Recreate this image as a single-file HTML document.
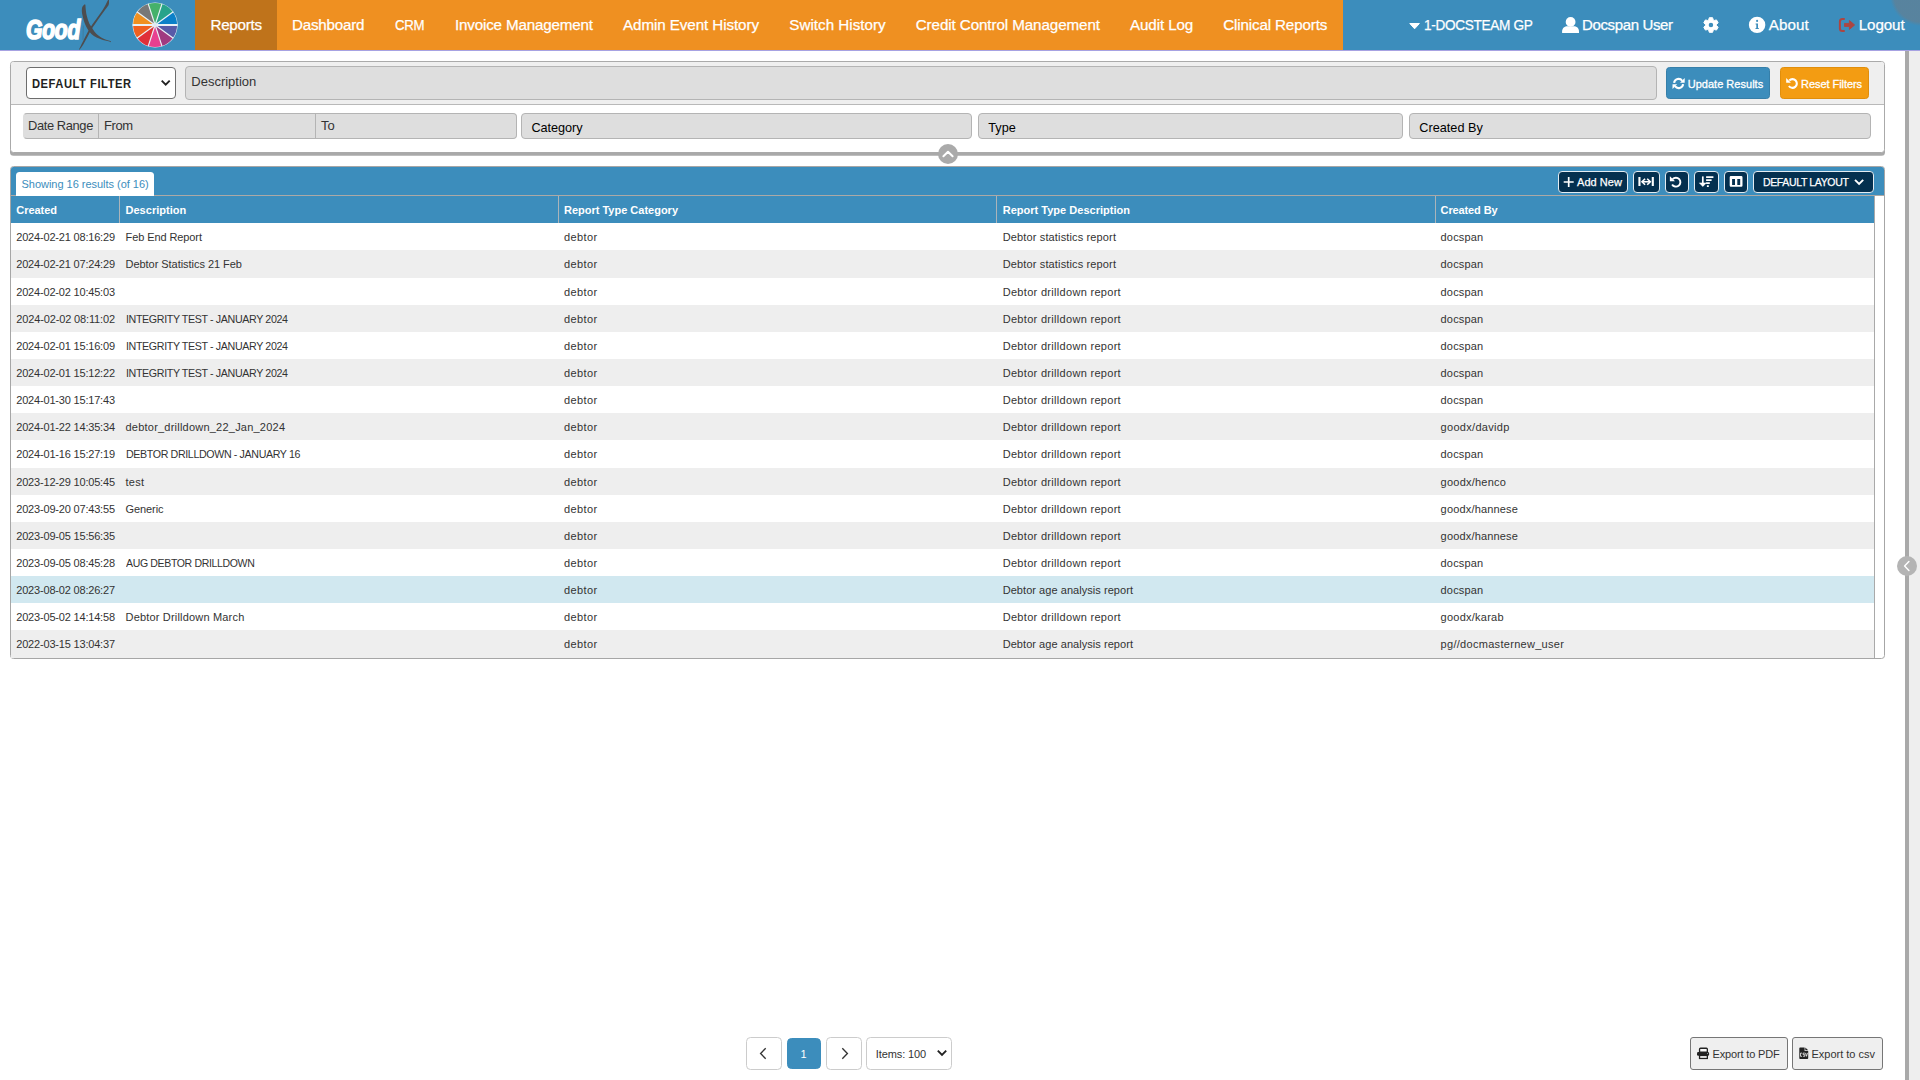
<!DOCTYPE html>
<html lang="en"><head><meta charset="utf-8"><title>Reports</title>
<style>
*{box-sizing:border-box;margin:0;padding:0}
html,body{width:1920px;height:1080px;overflow:hidden;background:#fff}
body{position:relative;font-family:"Liberation Sans",sans-serif;color:#333;font-size:11px}
.a{position:absolute}
.t{position:absolute;white-space:nowrap;display:block}
svg{position:absolute;display:block;overflow:visible}
.nv{font-size:15.2px;color:#fff;-webkit-text-stroke:.25px #fff}
.td{font-size:11px;color:#333}
.th{font-size:11px;color:#fff;font-weight:bold}
.ph{font-size:13px;color:#333}
.phb{font-size:12.7px;color:#000}
.in{position:absolute;background:#dedede;border:1px solid #b4b4b4;border-radius:4px}
.nb{position:absolute;background:#04304f;border:1px solid #e3ecf2;border-radius:4px;top:171px;height:21.5px}
.pg{position:absolute;top:1037px;height:33px;background:#fff;border:1px solid #ccc;border-radius:4.5px}
.ex{position:absolute;top:1037px;height:33px;background:#efefef;border:1px solid #767676;border-radius:3px}
</style></head><body>

<div class="a" style="left:0;top:0;width:1920px;height:50px;background:#3c8dbc"></div>
<div class="a" style="left:195px;top:0;width:1148px;height:50px;background:#ef9021"></div>
<div class="a" style="left:195px;top:0;width:82px;height:50px;background:#bf731b"></div>
<div class="a" style="left:0;top:50px;width:1920px;height:1px;background:#a7a2e2"></div>
<div class="a" style="left:1886px;top:-40px;width:70px;height:70px;border-radius:50%;background:radial-gradient(circle at 50% 50%,rgba(105,125,140,.62) 0,rgba(105,125,140,.62) 27px,rgba(105,125,140,0) 31px)"></div>
<span class="t nv" style="left:210.5px;top:14.3px;line-height:21.2px;letter-spacing:-0.281px;">Reports</span>
<span class="t nv" style="left:292px;top:14.3px;line-height:21.2px;letter-spacing:-0.227px;">Dashboard</span>
<span class="t nv" style="left:395px;top:14.3px;line-height:21.2px;letter-spacing:-0.380px;transform-origin:0 50%;transform:scaleX(0.8719);">CRM</span>
<span class="t nv" style="left:455px;top:14.3px;line-height:21.2px;letter-spacing:-0.176px;">Invoice Management</span>
<span class="t nv" style="left:623px;top:14.3px;line-height:21.2px;letter-spacing:-0.088px;">Admin Event History</span>
<span class="t nv" style="left:789.3px;top:14.3px;line-height:21.2px;letter-spacing:0.014px;">Switch History</span>
<span class="t nv" style="left:915.7px;top:14.3px;line-height:21.2px;letter-spacing:-0.094px;">Credit Control Management</span>
<span class="t nv" style="left:1130px;top:14.3px;line-height:21.2px;letter-spacing:-0.111px;">Audit Log</span>
<span class="t nv" style="left:1223.3px;top:14.3px;line-height:21.2px;letter-spacing:-0.157px;">Clinical Reports</span>
<span class="t nv" style="left:1423.7px;top:14.3px;line-height:21.2px;letter-spacing:-0.380px;transform-origin:0 50%;transform:scaleX(0.8978);">1-DOCSTEAM GP</span>
<span class="t nv" style="left:1582.4px;top:14.3px;line-height:21.2px;letter-spacing:-0.380px;transform-origin:0 50%;transform:scaleX(0.9885);">Docspan User</span>
<span class="t nv" style="left:1768.7px;top:14.3px;line-height:21.2px;letter-spacing:0.074px;">About</span>
<span class="t nv" style="left:1858.7px;top:14.3px;line-height:21.2px;letter-spacing:-0.091px;">Logout</span>
<span class="t" style="left:25.9px;top:12.9px;line-height:34px;font-size:27.5px;font-weight:bold;font-style:italic;color:#fff;transform-origin:0 0;transform:scaleX(.765);letter-spacing:-0.3px;-webkit-text-stroke:1.7px #fff">Good</span>
<svg style="left:70px;top:0" width="50" height="50" viewBox="70 0 50 50"><path fill="#4d4d4f" d="M84.8 4.3 C83.6 5 82.4 6.6 82 7.9 C81.6 10.5 82 13.2 82.5 15.6 C83 18.5 83.8 21 84.8 23.4 C85.6 25.4 86.6 27.4 87.7 29.2 C88.8 30.9 90 32.5 91.4 33.9 C93 35.4 94.7 36.6 96.6 37.6 C100.5 39.6 105.4 40.9 109.6 41.5 L110.3 42.2 L111 41.6 L110.4 41 C106.8 40 103.6 38.8 101.2 37.4 C99.4 36.3 97.9 35.2 96.6 33.9 C95.1 32.4 93.9 30.8 92.9 29.2 C91.4 26.8 90.2 24.9 89.3 23.4 C88.2 20.9 87.3 18.2 86.7 15.6 C86 12.5 85.6 8.6 85.4 4.7 Z"/><path fill="#4d4d4f" d="M108 0 L109 0 L109 3.1 C108.9 4 108.7 4.8 108.5 5.3 C107.2 7.2 105.8 9 104.6 10.5 C102 14 99.5 17.5 97.1 20.9 C95.2 23.6 93.4 26.2 91.9 28.5 C90.4 31 89 33.8 87.7 36.5 C86.2 39.3 84.7 41.9 83.3 44.4 C82 46.6 80.6 48.5 79.3 49.8 L78.9 49.6 C79.8 48 80.7 46.2 81.5 44.3 C82.8 41.7 84.1 39.1 85.4 36.5 C86.9 33.4 88.6 30.3 90.4 27.4 C91.8 25.2 93.4 23 95 20.8 C97.4 17.3 99.8 13.8 102.3 10.4 C103.3 8.8 104.4 7 105.4 5.2 C106.2 3.6 107 1.8 108 0 Z"/><path stroke="#4d4d4f" stroke-opacity=".55" stroke-width=".5" fill="none" d="M83.3 25.5 L83 40"/></svg>
<svg style="left:130px;top:0" width="50" height="50" viewBox="130 0 50 50"><circle cx="155.1" cy="25.0" r="22.55" fill="#e4eef4"/><path fill="#45b16a" d="M155.1 25.0 L148.30 4.08 A22.0 22.0 0 0 1 161.90 4.08 Z"/><path fill="#27a38a" d="M155.1 25.0 L161.90 4.08 A22.0 22.0 0 0 1 172.90 12.07 Z"/><path fill="#0b80c8" d="M155.1 25.0 L172.90 12.07 A22.0 22.0 0 0 1 177.10 25.00 Z"/><path fill="#585aa8" d="M155.1 25.0 L177.10 25.00 A22.0 22.0 0 0 1 172.90 37.93 Z"/><path fill="#a03a80" d="M155.1 25.0 L172.90 37.93 A22.0 22.0 0 0 1 161.90 45.92 Z"/><path fill="#e84090" d="M155.1 25.0 L161.90 45.92 A22.0 22.0 0 0 1 148.30 45.92 Z"/><path fill="#e03038" d="M155.1 25.0 L148.30 45.92 A22.0 22.0 0 0 1 137.30 37.93 Z"/><path fill="#f06020" d="M155.1 25.0 L137.30 37.93 A22.0 22.0 0 0 1 133.10 25.00 Z"/><path fill="#f09020" d="M155.1 25.0 L133.10 25.00 A22.0 22.0 0 0 1 137.30 12.07 Z"/><path fill="#787878" d="M155.1 25.0 L137.30 12.07 A22.0 22.0 0 0 1 148.30 4.08 Z"/><line x1="155.1" y1="25.0" x2="162.05" y2="3.60" stroke="#e9f1f6" stroke-width="1.15"/><line x1="155.1" y1="25.0" x2="173.30" y2="11.77" stroke="#e9f1f6" stroke-width="1.15"/><line x1="155.1" y1="25.0" x2="177.60" y2="25.00" stroke="#e9f1f6" stroke-width="2.0"/><line x1="155.1" y1="25.0" x2="173.30" y2="38.23" stroke="#e9f1f6" stroke-width="1.15"/><line x1="155.1" y1="25.0" x2="162.05" y2="46.40" stroke="#e9f1f6" stroke-width="1.15"/><line x1="155.1" y1="25.0" x2="148.15" y2="46.40" stroke="#e9f1f6" stroke-width="1.15"/><line x1="155.1" y1="25.0" x2="136.90" y2="38.23" stroke="#e9f1f6" stroke-width="1.15"/><line x1="155.1" y1="25.0" x2="132.60" y2="25.00" stroke="#e9f1f6" stroke-width="2.0"/><line x1="155.1" y1="25.0" x2="136.90" y2="11.77" stroke="#e9f1f6" stroke-width="1.15"/><line x1="155.1" y1="25.0" x2="148.15" y2="3.60" stroke="#e9f1f6" stroke-width="1.15"/><circle cx="155.1" cy="25.0" r="1.6" fill="#dde9f1"/></svg>
<svg style="left:1400px;top:0" width="520" height="50" viewBox="1400 0 520 50"><path fill="#fff" stroke="#fff" stroke-width="1" stroke-linejoin="round" d="M1409.8 23.5 L1419.4 23.5 L1414.6 28.8 Z"/><circle cx="1570.6" cy="21.9" r="4.9" fill="#fff"/><path fill="#fff" d="M1562.1 32.9 L1562.1 31.4 C1562.1 28.2 1564.6 26.3 1567.6 26.3 L1573.6 26.3 C1576.6 26.3 1579 28.2 1579 31.4 L1579 32.9 Z"/><path d="M1708.67 19.88 L1709.31 17.68 L1712.59 17.68 L1713.23 19.88 L1714.24 20.47 L1716.47 19.92 L1718.11 22.76 L1716.52 24.41 L1716.52 25.59 L1718.11 27.24 L1716.47 30.08 L1714.24 29.53 L1713.23 30.12 L1712.59 32.32 L1709.31 32.32 L1708.67 30.12 L1707.66 29.53 L1705.43 30.08 L1703.79 27.24 L1705.38 25.59 L1705.38 24.41 L1703.79 22.76 L1705.43 19.92 L1707.66 20.47 Z" fill="#fff" stroke="#fff" stroke-width="1.0" stroke-linejoin="round"/><circle cx="1710.95" cy="25" r="2.25" fill="#3c8dbc"/><circle cx="1757.1" cy="24.9" r="8.2" fill="#fff"/><circle cx="1757.1" cy="20.9" r="1.05" fill="#3c8dbc"/><path fill="#3c8dbc" d="M1755.6 23.4 L1758 23.4 L1758 27.9 L1758.8 27.9 L1758.8 29 L1755.5 29 L1755.5 27.9 L1756.3 27.9 L1756.3 24.5 L1755.6 24.5 Z"/><path fill="none" stroke="#ad4541" stroke-width="2" stroke-linecap="round" stroke-linejoin="round" d="M1844 18.9 L1842.4 18.9 Q1839.9 18.9 1839.9 21.4 L1839.9 28.5 Q1839.9 31 1842.4 31 L1844 31"/><path fill="#ad4541" stroke="#ad4541" stroke-width=".9" stroke-linejoin="round" d="M1844.5 23.45 L1849.4 23.45 L1849.4 20.5 L1854.6 24.95 L1849.4 29.4 L1849.4 26.45 L1844.5 26.45 Z"/></svg>
<div class="a" style="left:1909px;top:51px;width:11px;height:1029px;background:#eee"></div>
<div class="a" style="left:1905px;top:51px;width:4px;height:1029px;background:#a9a9a9"></div>
<div class="a" style="left:1896.5px;top:556px;width:20px;height:20px;border-radius:50%;background:#b4b4b4"></div>
<svg style="left:1896.5px;top:556px" width="20" height="20" viewBox="0 0 20 20"><path d="M11.9 5.6 L7.6 10 L11.9 14.4" fill="none" stroke="#fff" stroke-width="1.5" stroke-linecap="round" stroke-linejoin="round"/></svg>
<div class="a" style="left:10px;top:61px;width:1875px;height:92px;border:1px solid #aaa;border-radius:3.5px;background:#fff;box-shadow:0 2.8px 0 #a9a9a9"></div>
<div class="a" style="left:11px;top:62px;width:1873px;height:42px;background:#efefef;border-radius:2.5px 2.5px 0 0"></div>
<div class="a" style="left:11px;top:104px;width:1873px;height:1px;background:#b9b9b9"></div>
<div class="a" style="left:26px;top:67px;width:150px;height:32px;background:#fff;border:1px solid #6d6d6d;border-radius:4px"></div>
<span class="t" style="left:31.6px;top:67px;line-height:33.4px;font-size:13px;font-weight:bold;color:#222;transform-origin:0 50%;transform:scaleX(.86);letter-spacing:.62px">DEFAULT FILTER</span>
<svg style="left:160px;top:77px" width="12" height="12" viewBox="0 0 12 12"><path d="M1.7 3.7 L5.7 7.7 L9.7 3.7" fill="none" stroke="#222" stroke-width="1.9"/></svg>
<div class="in" style="left:185.3px;top:66.2px;width:1471.7px;height:33.5px"></div>
<span class="t ph" style="left:191.3px;top:66px;line-height:31.4px;letter-spacing:-0.003px;">Description</span>
<div class="a" style="left:1666px;top:67px;width:104px;height:32px;background:#3c8dbc;border:1px solid #367fa9;border-radius:3.5px"></div>
<div class="a" style="left:1780px;top:67px;width:89px;height:32px;background:#f39c12;border:1px solid #e08e0b;border-radius:3.5px"></div>
<span class="t" style="left:1687.7px;top:68.2px;line-height:33.4px;font-size:11px;color:#fff;-webkit-text-stroke:.3px #fff;letter-spacing:0.022px;">Update Results</span>
<span class="t" style="left:1801.1px;top:68.2px;line-height:33.4px;font-size:11px;color:#fff;-webkit-text-stroke:.3px #fff;letter-spacing:-0.062px;">Reset Filters</span>
<svg style="left:1672px;top:77px" width="14" height="14" viewBox="0 0 14 14"><path d="M2.1 5.9 A4.5 4.5 0 0 1 10.2 3.8" fill="none" stroke="#fff" stroke-width="2.1"/><path d="M11.1 7.1 A4.5 4.5 0 0 1 3.0 9.2" fill="none" stroke="#fff" stroke-width="2.1"/><path d="M12.7 1 V5.7 H8 Z" fill="#fff"/><path d="M0.5 12 V7.3 H5.2 Z" fill="#fff"/></svg>
<svg style="left:1786px;top:77px" width="14" height="14" viewBox="0 0 14 14"><path d="M3.3 3.55 A4.35 4.35 0 1 1 2.9 9.0" fill="none" stroke="#fff" stroke-width="2.1"/><path d="M0.2 1.1 L0.2 5.7 L4.9 5.7 Z" fill="#fff"/></svg>
<div class="in" style="left:23.2px;top:113.3px;width:493.4px;height:25.3px;border-left-color:#dedede"></div>
<div class="a" style="left:98px;top:114px;width:1px;height:24px;background:#b4b4b4"></div>
<div class="a" style="left:315px;top:114px;width:1px;height:24px;background:#b4b4b4"></div>
<span class="t ph" style="left:28.4px;top:113px;line-height:25.4px;letter-spacing:-0.380px;transform-origin:0 50%;transform:scaleX(0.9898);">Date Range</span>
<span class="t ph" style="left:104.3px;top:113px;line-height:25.4px;letter-spacing:-0.380px;transform-origin:0 50%;transform:scaleX(0.9999);">From</span>
<span class="t ph" style="left:321px;top:113px;line-height:25.4px;">To</span>
<div class="in" style="left:521.2px;top:113.3px;width:450.4px;height:25.3px"></div>
<div class="in" style="left:978.2px;top:113.3px;width:424.4px;height:25.3px"></div>
<div class="in" style="left:1409.2px;top:113.3px;width:461.4px;height:25.3px"></div>
<span class="t phb" style="left:531.5px;top:115px;line-height:27.6px;letter-spacing:-0.069px;">Category</span>
<span class="t phb" style="left:988.3px;top:115px;line-height:27.6px;">Type</span>
<span class="t phb" style="left:1419.3px;top:115px;line-height:27.6px;">Created By</span>
<div class="a" style="left:937.8px;top:144px;width:20px;height:20px;border-radius:50%;background:#aaa"></div>
<svg style="left:937.8px;top:144px" width="20" height="20" viewBox="0 0 20 20"><path d="M5.4 12.2 L10 7.7 L14.6 12.2" fill="none" stroke="#fff" stroke-width="2" stroke-linejoin="round" stroke-linecap="round"/></svg>
<div class="a" style="left:10px;top:166px;width:1875px;height:493px;border:1px solid #a6a6a6;border-radius:3.5px;background:#fff"></div>
<div class="a" style="left:11px;top:167px;width:1873px;height:28px;background:#3c8dbc;border-radius:2.5px 2.5px 0 0"></div>
<div class="a" style="left:11px;top:195px;width:1873px;height:1px;background:#aca9a6"></div>
<div class="a" style="left:11px;top:196px;width:1863px;height:27px;background:#3c8dbc"></div>
<div class="a" style="left:1874px;top:196px;width:1px;height:462px;background:#a9a9a9"></div>
<div class="a" style="left:119px;top:196px;width:1px;height:27px;background:#aab4ba"></div>
<div class="a" style="left:558px;top:196px;width:1px;height:27px;background:#aab4ba"></div>
<div class="a" style="left:996px;top:196px;width:1px;height:27px;background:#aab4ba"></div>
<div class="a" style="left:1435px;top:196px;width:1px;height:27px;background:#aab4ba"></div>
<div class="a" style="left:16px;top:172px;width:138px;height:24px;background:#fff;border-radius:3.5px 3.5px 0 0"></div>
<span class="t" style="left:21.5px;top:172px;line-height:25.6px;font-size:11px;color:#3c8dbc;letter-spacing:-0.024px;">Showing 16 results (of 16)</span>
<div class="nb" style="left:1558px;width:70px"></div>
<div class="nb" style="left:1633px;width:27px"></div>
<div class="nb" style="left:1665px;width:24px"></div>
<div class="nb" style="left:1694px;width:24.5px"></div>
<div class="nb" style="left:1724px;width:24px"></div>
<div class="nb" style="left:1753px;width:121px"></div>
<span class="t" style="left:1577px;top:171px;line-height:23.6px;font-size:11px;color:#fff;-webkit-text-stroke:.25px #fff;letter-spacing:0.060px;">Add New</span>
<span class="t" style="left:1763.4px;top:171px;line-height:23.6px;font-size:11px;color:#fff;-webkit-text-stroke:.25px #fff;letter-spacing:-0.380px;transform-origin:0 50%;transform:scaleX(0.9554);">DEFAULT LAYOUT</span>
<svg style="left:1550px;top:166px" width="330" height="30" viewBox="1550 166 330 30"><path d="M1563.7 182 H1573.7 M1568.7 177 V187" stroke="#fff" stroke-width="1.7" fill="none"/><path d="M1639.45 177.1 V186.1 M1652.8 177.1 V186.1" stroke="#fff" stroke-width="2.1" fill="none"/><path d="M1642.4 181.75 H1649.9" stroke="#fff" stroke-width="1.6" fill="none"/><path d="M1645.1 178.7 L1642 181.75 L1645.1 184.8 M1647.2 178.7 L1650.3 181.75 L1647.2 184.8" fill="none" stroke="#fff" stroke-width="1.6" stroke-linejoin="miter"/><path d="M1672.6 179.2 A4.45 4.45 0 1 1 1672.1 184.4" fill="none" stroke="#fff" stroke-width="1.9"/><path d="M1669.9 176.2 L1669.9 181.3 L1675 181.3 Z" fill="#fff"/><path d="M1702.8 176.4 V185.6" stroke="#fff" stroke-width="1.7" fill="none"/><path d="M1699.3 182.9 L1702.8 186.6 L1706.3 182.9 Z" fill="#fff" stroke="#fff" stroke-width=".5" stroke-linejoin="round"/><path d="M1706.1 177.05 H1713.4 M1706.1 180.1 H1711.6 M1706.1 183.15 H1709.8 M1706.9 186.05 H1708.8" stroke="#fff" stroke-width="1.8" fill="none"/><path fill="#fff" fill-rule="evenodd" d="M1730.9 176.1 H1741.3 Q1742.5 176.1 1742.5 177.3 V185.55 Q1742.5 186.75 1741.3 186.75 H1730.9 Q1729.7 186.75 1729.7 185.55 V177.3 Q1729.7 176.1 1730.9 176.1 Z M1732.1 178.9 V184.9 H1735 V178.9 Z M1737.3 178.9 V184.9 H1740.2 V178.9 Z"/><path d="M1855 179.8 L1859.1 183.9 L1863.2 179.8" fill="none" stroke="#fff" stroke-width="1.9"/></svg>
<span class="t th" style="left:16.25px;top:196px;line-height:28px;letter-spacing:-0.036px;">Created</span>
<span class="t th" style="left:125.5px;top:196px;line-height:28px;letter-spacing:0.023px;">Description</span>
<span class="t th" style="left:564px;top:196px;line-height:28px;letter-spacing:-0.005px;">Report Type Category</span>
<span class="t th" style="left:1002.7px;top:196px;line-height:28px;letter-spacing:0.016px;">Report Type Description</span>
<span class="t th" style="left:1440.6px;top:196px;line-height:28px;letter-spacing:-0.120px;">Created By</span>
<span class="t td" style="left:16.25px;top:223px;line-height:28.4px;letter-spacing:-0.186px;">2024-02-21 08:16:29</span>
<span class="t td" style="left:125.5px;top:223px;line-height:28.4px;letter-spacing:-0.089px;">Feb End Report</span>
<span class="t td" style="left:564px;top:223px;line-height:28.4px;letter-spacing:0.419px;">debtor</span>
<span class="t td" style="left:1002.7px;top:223px;line-height:28.4px;letter-spacing:0.141px;">Debtor statistics report</span>
<span class="t td" style="left:1440.6px;top:223px;line-height:28.4px;letter-spacing:0.151px;">docspan</span>
<div class="a" style="left:11px;top:250px;width:1863px;height:28px;background:#eeeeee"></div>
<span class="t td" style="left:16.25px;top:250px;line-height:28.4px;letter-spacing:-0.186px;">2024-02-21 07:24:29</span>
<span class="t td" style="left:125.5px;top:250px;line-height:28.4px;letter-spacing:-0.039px;">Debtor Statistics 21 Feb</span>
<span class="t td" style="left:564px;top:250px;line-height:28.4px;letter-spacing:0.419px;">debtor</span>
<span class="t td" style="left:1002.7px;top:250px;line-height:28.4px;letter-spacing:0.141px;">Debtor statistics report</span>
<span class="t td" style="left:1440.6px;top:250px;line-height:28.4px;letter-spacing:0.151px;">docspan</span>
<span class="t td" style="left:16.25px;top:278px;line-height:28.4px;letter-spacing:-0.186px;">2024-02-02 10:45:03</span>
<span class="t td" style="left:564px;top:278px;line-height:28.4px;letter-spacing:0.419px;">debtor</span>
<span class="t td" style="left:1002.7px;top:278px;line-height:28.4px;letter-spacing:0.305px;">Debtor drilldown report</span>
<span class="t td" style="left:1440.6px;top:278px;line-height:28.4px;letter-spacing:0.151px;">docspan</span>
<div class="a" style="left:11px;top:305px;width:1863px;height:27px;background:#eeeeee"></div>
<span class="t td" style="left:16.25px;top:305px;line-height:28.4px;letter-spacing:-0.140px;">2024-02-02 08:11:02</span>
<span class="t td" style="left:125.5px;top:305px;line-height:28.4px;letter-spacing:-0.380px;transform-origin:0 50%;transform:scaleX(0.9709);">INTEGRITY TEST - JANUARY 2024</span>
<span class="t td" style="left:564px;top:305px;line-height:28.4px;letter-spacing:0.419px;">debtor</span>
<span class="t td" style="left:1002.7px;top:305px;line-height:28.4px;letter-spacing:0.305px;">Debtor drilldown report</span>
<span class="t td" style="left:1440.6px;top:305px;line-height:28.4px;letter-spacing:0.151px;">docspan</span>
<span class="t td" style="left:16.25px;top:332px;line-height:28.4px;letter-spacing:-0.186px;">2024-02-01 15:16:09</span>
<span class="t td" style="left:125.5px;top:332px;line-height:28.4px;letter-spacing:-0.380px;transform-origin:0 50%;transform:scaleX(0.9709);">INTEGRITY TEST - JANUARY 2024</span>
<span class="t td" style="left:564px;top:332px;line-height:28.4px;letter-spacing:0.419px;">debtor</span>
<span class="t td" style="left:1002.7px;top:332px;line-height:28.4px;letter-spacing:0.305px;">Debtor drilldown report</span>
<span class="t td" style="left:1440.6px;top:332px;line-height:28.4px;letter-spacing:0.151px;">docspan</span>
<div class="a" style="left:11px;top:359px;width:1863px;height:27px;background:#eeeeee"></div>
<span class="t td" style="left:16.25px;top:359px;line-height:28.4px;letter-spacing:-0.186px;">2024-02-01 15:12:22</span>
<span class="t td" style="left:125.5px;top:359px;line-height:28.4px;letter-spacing:-0.380px;transform-origin:0 50%;transform:scaleX(0.9709);">INTEGRITY TEST - JANUARY 2024</span>
<span class="t td" style="left:564px;top:359px;line-height:28.4px;letter-spacing:0.419px;">debtor</span>
<span class="t td" style="left:1002.7px;top:359px;line-height:28.4px;letter-spacing:0.305px;">Debtor drilldown report</span>
<span class="t td" style="left:1440.6px;top:359px;line-height:28.4px;letter-spacing:0.151px;">docspan</span>
<span class="t td" style="left:16.25px;top:386px;line-height:28.4px;letter-spacing:-0.186px;">2024-01-30 15:17:43</span>
<span class="t td" style="left:564px;top:386px;line-height:28.4px;letter-spacing:0.419px;">debtor</span>
<span class="t td" style="left:1002.7px;top:386px;line-height:28.4px;letter-spacing:0.305px;">Debtor drilldown report</span>
<span class="t td" style="left:1440.6px;top:386px;line-height:28.4px;letter-spacing:0.151px;">docspan</span>
<div class="a" style="left:11px;top:413px;width:1863px;height:27px;background:#eeeeee"></div>
<span class="t td" style="left:16.25px;top:413px;line-height:28.4px;letter-spacing:-0.186px;">2024-01-22 14:35:34</span>
<span class="t td" style="left:125.5px;top:413px;line-height:28.4px;letter-spacing:0.222px;">debtor_drilldown_22_Jan_2024</span>
<span class="t td" style="left:564px;top:413px;line-height:28.4px;letter-spacing:0.419px;">debtor</span>
<span class="t td" style="left:1002.7px;top:413px;line-height:28.4px;letter-spacing:0.305px;">Debtor drilldown report</span>
<span class="t td" style="left:1440.6px;top:413px;line-height:28.4px;letter-spacing:0.295px;">goodx/davidp</span>
<span class="t td" style="left:16.25px;top:440px;line-height:28.4px;letter-spacing:-0.186px;">2024-01-16 15:27:19</span>
<span class="t td" style="left:125.5px;top:440px;line-height:28.4px;letter-spacing:-0.380px;transform-origin:0 50%;transform:scaleX(0.9690);">DEBTOR DRILLDOWN - JANUARY 16</span>
<span class="t td" style="left:564px;top:440px;line-height:28.4px;letter-spacing:0.419px;">debtor</span>
<span class="t td" style="left:1002.7px;top:440px;line-height:28.4px;letter-spacing:0.305px;">Debtor drilldown report</span>
<span class="t td" style="left:1440.6px;top:440px;line-height:28.4px;letter-spacing:0.151px;">docspan</span>
<div class="a" style="left:11px;top:468px;width:1863px;height:27px;background:#eeeeee"></div>
<span class="t td" style="left:16.25px;top:468px;line-height:28.4px;letter-spacing:-0.186px;">2023-12-29 10:05:45</span>
<span class="t td" style="left:125.5px;top:468px;line-height:28.4px;letter-spacing:0.255px;">test</span>
<span class="t td" style="left:564px;top:468px;line-height:28.4px;letter-spacing:0.419px;">debtor</span>
<span class="t td" style="left:1002.7px;top:468px;line-height:28.4px;letter-spacing:0.305px;">Debtor drilldown report</span>
<span class="t td" style="left:1440.6px;top:468px;line-height:28.4px;letter-spacing:0.230px;">goodx/henco</span>
<span class="t td" style="left:16.25px;top:495px;line-height:28.4px;letter-spacing:-0.186px;">2023-09-20 07:43:55</span>
<span class="t td" style="left:125.5px;top:495px;line-height:28.4px;letter-spacing:-0.089px;">Generic</span>
<span class="t td" style="left:564px;top:495px;line-height:28.4px;letter-spacing:0.419px;">debtor</span>
<span class="t td" style="left:1002.7px;top:495px;line-height:28.4px;letter-spacing:0.305px;">Debtor drilldown report</span>
<span class="t td" style="left:1440.6px;top:495px;line-height:28.4px;letter-spacing:0.172px;">goodx/hannese</span>
<div class="a" style="left:11px;top:522px;width:1863px;height:27px;background:#eeeeee"></div>
<span class="t td" style="left:16.25px;top:522px;line-height:28.4px;letter-spacing:-0.186px;">2023-09-05 15:56:35</span>
<span class="t td" style="left:564px;top:522px;line-height:28.4px;letter-spacing:0.419px;">debtor</span>
<span class="t td" style="left:1002.7px;top:522px;line-height:28.4px;letter-spacing:0.305px;">Debtor drilldown report</span>
<span class="t td" style="left:1440.6px;top:522px;line-height:28.4px;letter-spacing:0.172px;">goodx/hannese</span>
<span class="t td" style="left:16.25px;top:549px;line-height:28.4px;letter-spacing:-0.186px;">2023-09-05 08:45:28</span>
<span class="t td" style="left:125.5px;top:549px;line-height:28.4px;letter-spacing:-0.380px;transform-origin:0 50%;transform:scaleX(0.9581);">AUG DEBTOR DRILLDOWN</span>
<span class="t td" style="left:564px;top:549px;line-height:28.4px;letter-spacing:0.419px;">debtor</span>
<span class="t td" style="left:1002.7px;top:549px;line-height:28.4px;letter-spacing:0.305px;">Debtor drilldown report</span>
<span class="t td" style="left:1440.6px;top:549px;line-height:28.4px;letter-spacing:0.151px;">docspan</span>
<div class="a" style="left:11px;top:576px;width:1863px;height:27px;background:#d1e8f0"></div>
<span class="t td" style="left:16.25px;top:576px;line-height:28.4px;letter-spacing:-0.186px;">2023-08-02 08:26:27</span>
<span class="t td" style="left:564px;top:576px;line-height:28.4px;letter-spacing:0.419px;">debtor</span>
<span class="t td" style="left:1002.7px;top:576px;line-height:28.4px;letter-spacing:0.051px;">Debtor age analysis report</span>
<span class="t td" style="left:1440.6px;top:576px;line-height:28.4px;letter-spacing:0.151px;">docspan</span>
<span class="t td" style="left:16.25px;top:603px;line-height:28.4px;letter-spacing:-0.186px;">2023-05-02 14:14:58</span>
<span class="t td" style="left:125.5px;top:603px;line-height:28.4px;letter-spacing:0.182px;">Debtor Drilldown March</span>
<span class="t td" style="left:564px;top:603px;line-height:28.4px;letter-spacing:0.419px;">debtor</span>
<span class="t td" style="left:1002.7px;top:603px;line-height:28.4px;letter-spacing:0.305px;">Debtor drilldown report</span>
<span class="t td" style="left:1440.6px;top:603px;line-height:28.4px;letter-spacing:0.245px;">goodx/karab</span>
<div class="a" style="left:11px;top:630px;width:1863px;height:28px;background:#eeeeee"></div>
<span class="t td" style="left:16.25px;top:630px;line-height:28.4px;letter-spacing:-0.186px;">2022-03-15 13:04:37</span>
<span class="t td" style="left:564px;top:630px;line-height:28.4px;letter-spacing:0.419px;">debtor</span>
<span class="t td" style="left:1002.7px;top:630px;line-height:28.4px;letter-spacing:0.051px;">Debtor age analysis report</span>
<span class="t td" style="left:1440.6px;top:630px;line-height:28.4px;letter-spacing:0.295px;">pg//docmasternew_user</span>
<div class="pg" style="left:746.3px;width:35.4px"></div>
<div class="pg" style="left:786.7px;width:34.5px;top:1037.7px;height:31.5px;background:#3c8dbc;border-color:#3c8dbc"></div>
<div class="pg" style="left:826.2px;width:35.4px"></div>
<div class="pg" style="left:866px;width:86px"></div>
<span class="t" style="left:800.5px;top:1038px;line-height:33.6px;font-size:11px;color:#fff">1</span>
<span class="t" style="left:875.8px;top:1038px;line-height:33.6px;font-size:11px;color:#333;letter-spacing:-0.107px;">Items: 100</span>
<svg style="left:740px;top:1030px" width="220" height="46" viewBox="740 1030 220 46"><path d="M765.7 1048.3 L760.6 1053.5 L765.7 1058.7" fill="none" stroke="#333" stroke-width="1.35"/><path d="M842.3 1048.3 L847.4 1053.5 L842.3 1058.7" fill="none" stroke="#333" stroke-width="1.35"/><path d="M937.8 1050.6 L942 1054.8 L946.2 1050.6" fill="none" stroke="#222" stroke-width="1.9"/></svg>
<div class="ex" style="left:1689.5px;width:98.2px"></div>
<div class="ex" style="left:1792px;width:90.8px"></div>
<span class="t" style="left:1712.5px;top:1037px;line-height:34.2px;font-size:11px;color:#333;letter-spacing:-0.157px;">Export to PDF</span>
<span class="t" style="left:1811.4px;top:1037px;line-height:34.2px;font-size:11px;color:#333;letter-spacing:0.010px;">Export to csv</span>
<svg style="left:1697px;top:1047px" width="13" height="13" viewBox="0 0 13 13"><path d="M2.55 5.2 V2.2 Q2.55 1.25 3.5 1.25 H9.4 Q10.35 1.25 10.35 2.2 V5.2 Z" fill="#fafafa" stroke="#222" stroke-width="1.3"/><rect x="0" y="5.1" width="12.1" height="3.6" rx="1.3" fill="#222"/><rect x="2.55" y="8.5" width="7.8" height="2.95" fill="#fff" stroke="#222" stroke-width="1.3"/><circle cx="10.5" cy="6.5" r=".55" fill="#9aa"/></svg>
<svg style="left:1799px;top:1047px" width="10" height="13" viewBox="0 0 10 13"><path d="M0.3 1.4 Q0.3 0.6 1.1 0.6 H5.6 V3.9 H9.2 V11.3 Q9.2 12.1 8.4 12.1 H1.1 Q0.3 12.1 0.3 11.3 Z" fill="#222"/><path d="M6.3 0.6 L9.2 3.3 H6.3 Z" fill="#222"/><path d="M3.1 6.1 H1.5 V9.3 H3.1 M5.8 6.1 H4.1 V7.7 H5.8 V9.3 H4.1 M6.5 5.9 L7.5 9.3 L8.5 5.9" stroke="#fff" stroke-width=".75" fill="none"/></svg>
</body></html>
